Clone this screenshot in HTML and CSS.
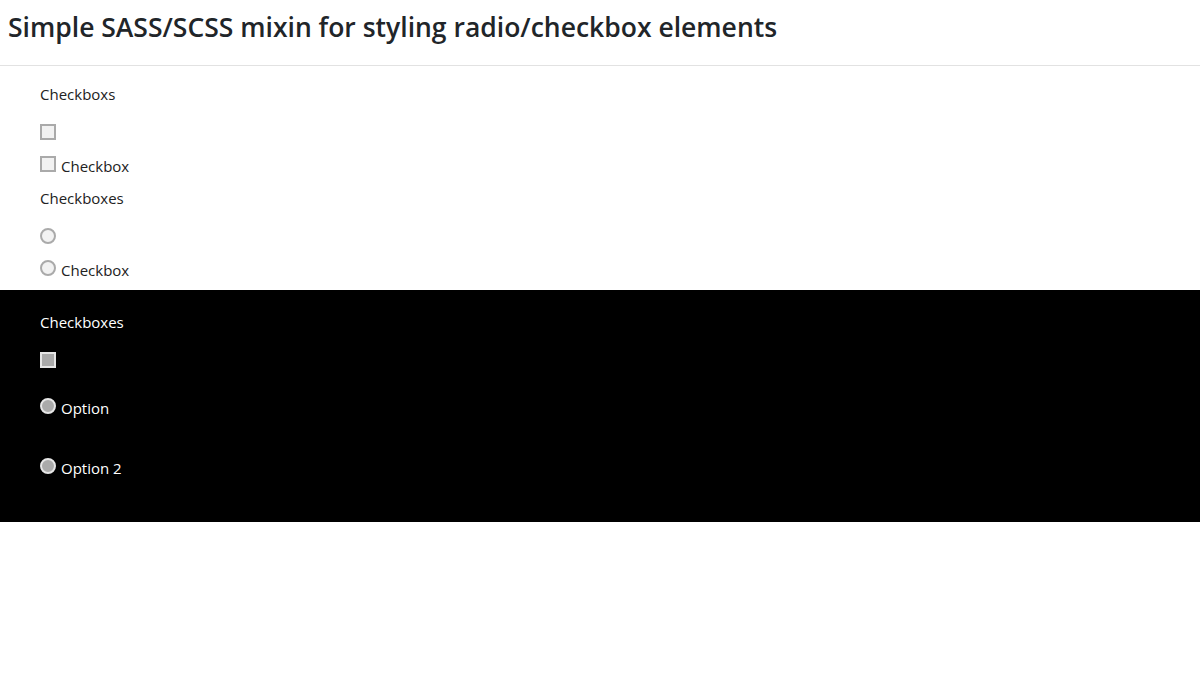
FILE: index.html
```html
<!DOCTYPE html>
<html lang="en">
<head>
    <meta charset="UTF-8">
    <meta name="viewport" content="width=device-width, initial-scale=1.0">
    <title>Simple SASS/SCSS mixin for styling radio/checkbox elements</title>
    <link rel="stylesheet" href="styles.css">
</head>
<body>

    <!-- Cabecera -->
    <header class="page-header">
        <h1>Simple SASS/SCSS mixin for styling radio/checkbox elements</h1>
    </header>

    <!-- Tema claro -->
    <section class="demo">
        <div class="group">
            <p class="group-title">Checkboxs</p>
            <label class="row"><input type="checkbox" class="box"></label>
            <label class="row"><input type="checkbox" class="box"><span>Checkbox</span></label>
        </div>
        <div class="group">
            <p class="group-title">Checkboxes</p>
            <label class="row"><input type="radio" class="box round" name="r1"></label>
            <label class="row"><input type="radio" class="box round" name="r1"><span>Checkbox</span></label>
        </div>
    </section>

    <!-- Tema oscuro -->
    <section class="demo dark">
        <div class="group">
            <p class="group-title">Checkboxes</p>
            <label class="row"><input type="checkbox" class="box"></label>
            <label class="row tall"><input type="radio" class="box round" name="r2"><span>Option</span></label>
            <label class="row tall"><input type="radio" class="box round" name="r2"><span>Option 2</span></label>
        </div>
    </section>

</body>
</html>
```

FILE: styles.css
```css
/* Estilos generales */
* {
    margin: 0;
    padding: 0;
    box-sizing: border-box;
    font-family: 'Segoe UI', 'Open Sans', sans-serif;
}

body {
    background-color: #fff;
    color: #212529;
}

/* Cabecera */
.page-header {
    height: 66px;
    padding: 8px 8px 0;
    border-bottom: 1px solid #e2e2e2;
}

.page-header h1 {
    font-size: 26.5px;
    font-weight: 600;
    line-height: 38px;
}

/* Bloques de demostración */
.demo {
    padding: 16px 40px 0;
    font-size: 15px;
    color: #222;
}

.demo.dark {
    background-color: #000;
    color: #fff;
    padding: 20px 40px 26px;
}

.group {
    margin-bottom: 6px;
}

.dark .group {
    margin-bottom: 0;
}

.group-title {
    line-height: 24px;
    margin-bottom: 10px;
}

.row {
    display: flex;
    align-items: center;
    height: 32px;
    cursor: pointer;
}

.row.tall {
    height: 60px;
}

.row span {
    margin-left: 5px;
    line-height: 24px;
    position: relative;
    top: 2px;
}

/* Casillas personalizadas */
.box {
    appearance: none;
    -webkit-appearance: none;
    width: 16px;
    height: 16px;
    border: 2px solid #aaa;
    background-color: #f2f2f2;
    flex-shrink: 0;
    cursor: pointer;
}

.box.round {
    border-radius: 50%;
}

.dark .box {
    border-color: #e6e6e6;
    background-color: #aaa;
}
```
